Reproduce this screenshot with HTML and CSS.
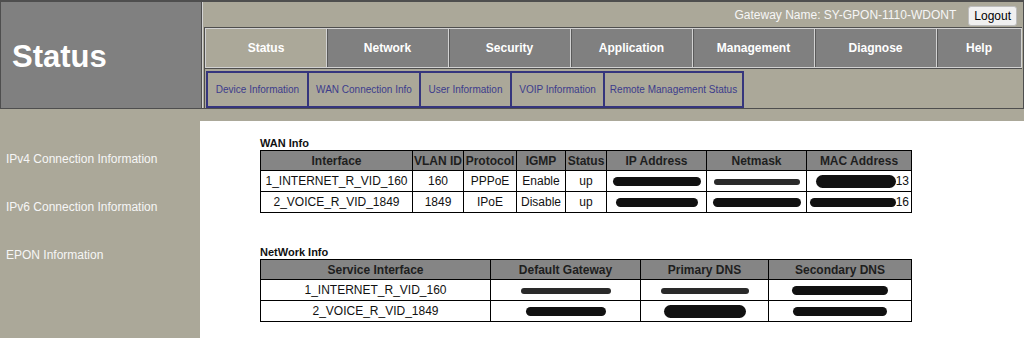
FILE: index.html
```html
<!DOCTYPE html>
<html lang="en">
<head>
    <meta charset="UTF-8">
    <title>Status</title>
    <link rel="stylesheet" href="styles.css">
</head>
<body>
    <div class="page">
        <div class="header">
            <div class="logo">Status</div>
            <div class="head-right">
                <div class="topbar">
                    <span class="gw-name">Gateway Name: SY-GPON-1110-WDONT</span>
                    <button class="logout">Logout</button>
                </div>
                <div class="menu">
                    <a class="tab active">Status</a>
                    <a class="tab">Network</a>
                    <a class="tab">Security</a>
                    <a class="tab">Application</a>
                    <a class="tab">Management</a>
                    <a class="tab">Diagnose</a>
                    <a class="tab last">Help</a>
                </div>
                <div class="submenu">
                    <div class="sub-items">
                        <a class="sub" style="width: 99px">Device Information</a>
                        <a class="sub" style="width: 110px">WAN Connection Info</a>
                        <a class="sub" style="width: 89px">User Information</a>
                        <a class="sub" style="width: 91px">VOIP Information</a>
                        <a class="sub" style="width: 137px">Remote Management Status</a>
                    </div>
                </div>
            </div>
        </div>
        <div class="strip"></div>
        <div class="main">
            <div class="sidebar">
                <a class="side-link">IPv4 Connection Information</a>
                <a class="side-link">IPv6 Connection Information</a>
                <a class="side-link">EPON Information</a>
            </div>
            <div class="content">
                <div class="caption">WAN Info</div>
                <table class="info wan">
                    <tr>
                        <th style="width: 151px">Interface</th>
                        <th style="width: 50px">VLAN ID</th>
                        <th style="width: 52px">Protocol</th>
                        <th style="width: 48px">IGMP</th>
                        <th style="width: 40px">Status</th>
                        <th style="width: 99px">IP Address</th>
                        <th style="width: 99px">Netmask</th>
                        <th>MAC Address</th>
                    </tr>
                    <tr>
                        <td>1_INTERNET_R_VID_160</td>
                        <td>160</td>
                        <td>PPPoE</td>
                        <td>Enable</td>
                        <td>up</td>
                        <td><span class="redact" style="width: 88px"></span></td>
                        <td><span class="redact light" style="width: 86px"></span></td>
                        <td class="mac"><span class="redact tall" style="width: 80px"></span>13</td>
                    </tr>
                    <tr>
                        <td>2_VOICE_R_VID_1849</td>
                        <td>1849</td>
                        <td>IPoE</td>
                        <td>Disable</td>
                        <td>up</td>
                        <td><span class="redact" style="width: 82px"></span></td>
                        <td><span class="redact" style="width: 88px"></span></td>
                        <td class="mac"><span class="redact" style="width: 86px"></span>16</td>
                    </tr>
                </table>

                <div class="caption second">NetWork Info</div>
                <table class="info net">
                    <tr>
                        <th style="width: 229px">Service Interface</th>
                        <th style="width: 149px">Default Gateway</th>
                        <th style="width: 127px">Primary DNS</th>
                        <th>Secondary DNS</th>
                    </tr>
                    <tr>
                        <td>1_INTERNET_R_VID_160</td>
                        <td><span class="redact light" style="width: 90px"></span></td>
                        <td><span class="redact light" style="width: 88px"></span></td>
                        <td><span class="redact" style="width: 96px"></span></td>
                    </tr>
                    <tr>
                        <td>2_VOICE_R_VID_1849</td>
                        <td><span class="redact" style="width: 80px"></span></td>
                        <td><span class="redact tall" style="width: 82px"></span></td>
                        <td><span class="redact" style="width: 94px"></span></td>
                    </tr>
                </table>
            </div>
        </div>
    </div>
</body>
</html>
```

FILE: styles.css
```css
body {
    margin: 0;
    padding: 0;
    background-color: #ffffff;
    font-family: "Liberation Sans", Arial, sans-serif;
}
.page {
    width: 1024px;
    height: 338px;
    background-color: #aba899;
    display: flex;
    flex-direction: column;
}
.header {
    display: flex;
    height: 106px;
    border: 1px solid #4e4e4e;
    border-top-width: 2px;
}
.logo {
    width: 201px;
    flex-shrink: 0;
    background-color: #808080;
    border-right: 1px solid #4e4e4e;
    box-shadow: 1px 0 0 #d4d4d4;
    color: #ffffff;
    font-weight: bold;
    font-size: 31px;
    display: flex;
    align-items: center;
    padding-left: 11px;
    box-sizing: border-box;
    padding-top: 3px;
}
.head-right {
    flex: 1;
    min-width: 0;
    display: flex;
    flex-direction: column;
    margin-left: 2px;
}
.topbar {
    height: 25px;
    display: flex;
    align-items: center;
    justify-content: flex-end;
    padding-right: 6px;
}
.gw-name {
    color: #f6f6f6;
    font-size: 12px;
    margin-right: 12px;
}
.logout {
    font-family: "Liberation Sans", Arial, sans-serif;
    font-size: 12px;
    background-color: #f0f0f0;
    border: 1px solid #bdbdbd;
    border-radius: 3px;
    padding: 2px 5px;
    height: 20px;
    margin-top: 2px;
}
.menu {
    display: flex;
    height: 40px;
    border: 1px solid #4e4e4e;
    border-right: none;
    margin-right: 1px;
}
.tab {
    width: 121px;
    flex-shrink: 0;
    display: flex;
    align-items: center;
    justify-content: center;
    background-color: #808080;
    color: #ffffff;
    font-weight: bold;
    font-size: 12px;
    border: 1px solid #d2d2d2;
    border-left: none;
    box-shadow: inset 1px 0 0 #5a5a5a;
}
.tab:first-child {
    border-left: 1px solid #d2d2d2;
    box-shadow: none;
    width: 120px;
}
.tab.active {
    background-color: #aba899;
}
.tab.last {
    flex: 1;
    width: auto;
}
.submenu {
    flex: 1;
    display: flex;
    align-items: center;
    border-left: 1px solid #4e4e4e;
    padding-left: 1px;
}
.sub-items {
    display: flex;
    height: 33px;
    border: 2px solid #35357d;
    border-right: none;
    margin-top: 1px;
}
.sub {
    display: flex;
    align-items: center;
    justify-content: center;
    border-right: 2px solid #35357d;
    color: #3c3c8c;
    font-size: 10px;
}
.strip {
    height: 12px;
}
.main {
    flex: 1;
    display: flex;
    min-height: 0;
}
.sidebar {
    width: 200px;
    flex-shrink: 0;
    display: flex;
    flex-direction: column;
    padding-top: 31px;
    gap: 34px;
}
.side-link {
    color: #f6f6f6;
    font-size: 12px;
    padding-left: 6px;
    line-height: 14px;
}
.content {
    flex: 1;
    background-color: #ffffff;
    padding: 16px 0 0 60px;
    margin-right: -8px;
}
.caption {
    font-size: 11px;
    font-weight: bold;
    color: #111111;
    line-height: 13px;
}
.caption.second {
    margin-top: 33px;
}
.info {
    border-collapse: collapse;
    width: 652px;
    font-size: 12px;
}
.info th {
    background-color: #858585;
    color: #1e1e1e;
    font-weight: bold;
    border: 1px solid #000000;
    height: 19px;
    padding: 0;
}
.info td {
    border: 1px solid #000000;
    text-align: center;
    color: #111111;
    height: 20px;
    padding: 0;
}
.info td.mac {
    text-align: right;
    padding-right: 2px;
}
.redact {
    display: inline-block;
    height: 9px;
    background-color: #111111;
    border-radius: 5px;
    vertical-align: middle;
}
.redact.light {
    height: 6px;
    background-color: #2a2a2a;
}
.redact.tall {
    height: 13px;
    border-radius: 7px;
}
```
